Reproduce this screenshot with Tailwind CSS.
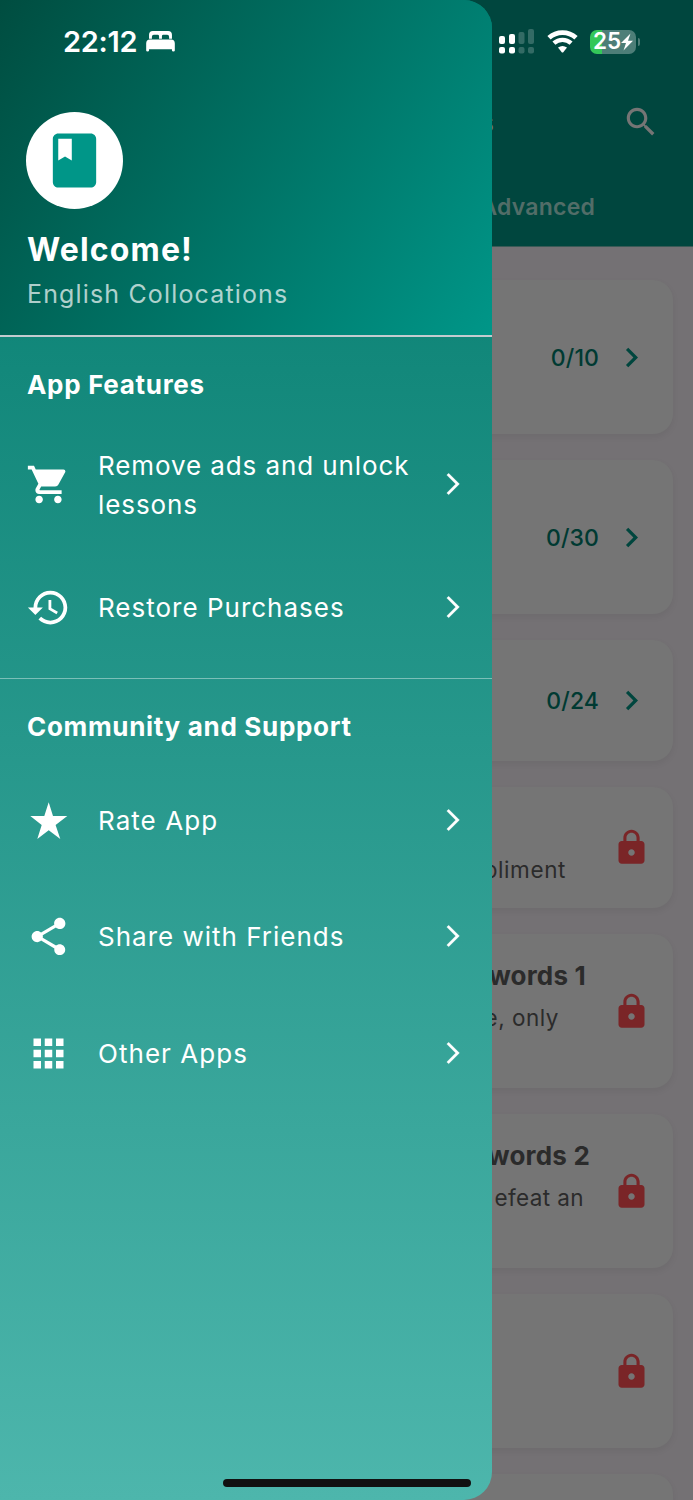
<!DOCTYPE html>
<html lang="en">
<head>
    <meta charset="UTF-8">
    <title>English Collocations</title>
    <script src="https://cdn.jsdelivr.net/npm/@tailwindcss/browser@4"></script>
</head>
<body class="relative w-[693px] h-[1500px] overflow-hidden bg-[#747174] font-['Inter','Liberation_Sans',sans-serif]">

<svg class="hidden">
    <symbol id="next" viewBox="0 0 24 24"><path d="M6.23 20.23 8 22l10-10L8 2 6.23 3.77 14.46 12z" stroke="white" stroke-width=".2" stroke-linejoin="round"/></symbol>
    <symbol id="chevron" viewBox="0 0 24 24"><path d="M10 6 8.59 7.41 13.17 12l-4.58 4.59L10 18l6-6z"/></symbol>
    <symbol id="lock" viewBox="0 0 24 24"><path d="M18 8h-1V6c0-2.76-2.24-5-5-5S7 3.24 7 6v2H6c-1.1 0-2 .9-2 2v10c0 1.1.9 2 2 2h12c1.1 0 2-.9 2-2V10c0-1.1-.9-2-2-2zm-6 9c-1.1 0-2-.9-2-2s.9-2 2-2 2 .9 2 2-.9 2-2 2zm3.1-9H8.9V6c0-1.71 1.39-3.1 3.1-3.1 1.71 0 3.1 1.39 3.1 3.1v2z"/></symbol>
</svg>

<!-- Lessons screen, dimmed behind the drawer -->
<main class="h-[1500px] overflow-hidden">
    <header class="h-[247px] bg-[#00463e] border-b border-[#3a5a56] pt-[98px]">
        <div class="h-[47px] pr-[33px] flex items-center justify-between text-[#757575]">
            <span class="w-[494px] pt-[2px] text-right text-[26px] font-medium">Collocations</span>
            <svg class="w-[38px] h-[38px] fill-[#757575]" viewBox="0 0 24 24"><path d="M15.5 14h-.79l-.28-.27C15.41 12.59 16 11.11 16 9.5 16 5.91 13.09 3 9.5 3S3 5.91 3 9.5 5.91 16 9.5 16c1.61 0 3.09-.59 4.23-1.57l.27.28v.79l5 4.99L20.49 19l-4.99-5zm-6 0C7.01 14 5 11.99 5 9.5S7.01 5 9.5 5 14 7.01 14 9.5 11.99 14 9.5 14z"/></svg>
        </div>
        <div class="mt-[47px] pr-[98px] text-right text-[23px] leading-[31px] font-semibold tracking-[0.2px] text-[#526d68]">Advanced</div>
    </header>
    <section class="pl-5 pr-5 pt-[33px] flex flex-col gap-[26px] text-[#2b2b2b]">
        <div class="h-[154px] shrink-0 rounded-[20px] bg-[#757575] shadow-[0_3px_7px_rgba(0,0,0,0.06)] pr-[22px] flex items-center justify-end gap-[13px] text-[23px] font-medium tracking-[0.1px] text-[#003a32]">
            <span class="pt-[2px]">0/10</span>
            <svg class="w-[39px] h-[39px] fill-[#00463e]"><use href="#chevron"/></svg>
        </div>
        <div class="h-[154px] shrink-0 rounded-[20px] bg-[#757575] shadow-[0_3px_7px_rgba(0,0,0,0.06)] pr-[22px] flex items-center justify-end gap-[13px] text-[23px] font-medium tracking-[0.1px] text-[#003a32]">
            <span class="pt-[2px]">0/30</span>
            <svg class="w-[39px] h-[39px] fill-[#00463e]"><use href="#chevron"/></svg>
        </div>
        <div class="h-[121px] shrink-0 rounded-[20px] bg-[#757575] shadow-[0_3px_7px_rgba(0,0,0,0.06)] pr-[22px] flex items-center justify-end gap-[13px] text-[23px] font-medium tracking-[0.1px] text-[#003a32]">
            <span class="pt-[2px]">0/24</span>
            <svg class="w-[39px] h-[39px] fill-[#00463e]"><use href="#chevron"/></svg>
        </div>
        <div class="h-[121px] shrink-0 rounded-[20px] bg-[#757575] shadow-[0_3px_7px_rgba(0,0,0,0.06)] pr-[22px] flex items-center">
            <div class="w-[546px] pt-[45px] text-right text-[22.5px] leading-[32px] tracking-[0.6px]">compliment</div>
            <svg class="ml-auto w-[39px] h-[39px] fill-[#7a2527]"><use href="#lock"/></svg>
        </div>
        <div class="h-[154px] shrink-0 rounded-[20px] bg-[#757575] shadow-[0_3px_7px_rgba(0,0,0,0.06)] pr-[22px] flex items-center justify-between">
            <div class="h-full pt-[24px]">
                <div class="w-[566px] text-right text-[26px] leading-[36px] font-bold tracking-[0.2px]">words 1</div>
                <div class="w-[539px] mt-[8px] text-right text-[22.5px] leading-[32px] tracking-[0.5px]">e, only</div>
            </div>
            <svg class="-ml-20 w-[39px] h-[39px] fill-[#7a2527]"><use href="#lock"/></svg>
        </div>
        <div class="h-[154px] shrink-0 rounded-[20px] bg-[#757575] shadow-[0_3px_7px_rgba(0,0,0,0.06)] pr-[22px] flex items-center justify-between">
            <div class="h-full pt-[24px]">
                <div class="w-[570px] text-right text-[26px] leading-[36px] font-bold tracking-[0.2px]">words 2</div>
                <div class="w-[564px] mt-[8px] text-right text-[22.5px] leading-[32px] tracking-[0.4px]">efeat an</div>
            </div>
            <svg class="-ml-20 w-[39px] h-[39px] fill-[#7a2527]"><use href="#lock"/></svg>
        </div>
        <div class="h-[154px] shrink-0 rounded-[20px] bg-[#757575] shadow-[0_3px_7px_rgba(0,0,0,0.06)] pr-[22px] flex items-center justify-end">
            <svg class="w-[39px] h-[39px] fill-[#7a2527]"><use href="#lock"/></svg>
        </div>
        <div class="h-[154px] shrink-0 rounded-[20px] bg-[#757575] shadow-[0_3px_7px_rgba(0,0,0,0.06)]"></div>
    </section>
</main>

<!-- Drawer -->
<aside class="absolute left-0 top-0 w-[492px] h-[1500px] overflow-hidden rounded-r-[28px] bg-[linear-gradient(180deg,#00796b,#4db6ac)] text-white fill-white">
    <div class="h-[337px] bg-[linear-gradient(124.3deg,#004d40,#009688)] border-b-2 border-[#c2ccd0] pt-[112px] pl-[26px]">
        <div class="w-[97px] h-[97px] rounded-full bg-white flex items-center justify-center">
            <svg class="w-[65px] h-[65px] fill-[#009688]" viewBox="0 0 24 24"><path d="M18 2H6c-1.1 0-2 .9-2 2v16c0 1.1.9 2 2 2h12c1.1 0 2-.9 2-2V4c0-1.1-.9-2-2-2zM6 4h5v8l-2.500-1.500L6 12V4z"/></svg>
        </div>
        <div class="mt-[20px] pl-px text-[32px] leading-[42px] font-bold tracking-[1.15px]">Welcome!</div>
        <div class="mt-[6px] pl-px text-[25px] leading-[34px] tracking-[1.15px] text-white/70">English Collocations</div>
    </div>

    <div class="h-[342px] border-b-[1.5px] border-white/40 pt-[30px] pl-[26px] pr-[26px]">
        <h2 class="pl-px text-[26px] leading-[36px] font-bold tracking-[0.7px]">App Features</h2>
        <div class="mt-[42px] h-[78px] flex items-center">
            <svg class="w-[45px] h-[45px]" viewBox="0 0 24 24"><path d="M7 18c-1.1 0-1.99.9-1.99 2S5.9 22 7 22s2-.9 2-2-.9-2-2-2zM1 2v2h2l3.6 7.59-1.35 2.45c-.16.28-.25.61-.25.96 0 1.1.9 2 2 2h12v-2H7.42c-.14 0-.25-.11-.25-.25l.03-.12.9-1.63h7.45c.75 0 1.41-.41 1.75-1.03l3.58-6.49c.08-.14.12-.31.12-.48 0-.55-.45-1-1-1H5.21l-.94-2H1zm16 16c-1.1 0-1.99.9-1.99 2s.89 2 1.99 2 2-.9 2-2-.9-2-2-2z"/></svg>
            <span class="ml-[27px] w-[330px] pt-px text-[26px] leading-[39px] tracking-[0.9px]">Remove ads and unlock lessons</span>
            <svg class="ml-auto w-[26px] h-[26px]"><use href="#next"/></svg>
        </div>
        <div class="mt-[65px] h-[38px] flex items-center">
            <svg class="w-[45px] h-[45px]" viewBox="0 0 24 24"><path d="M13 3c-4.97 0-9 4.03-9 9H1l3.89 3.89.07.14L9 12H6c0-3.87 3.13-7 7-7s7 3.13 7 7-3.13 7-7 7c-1.93 0-3.68-.79-4.94-2.06l-1.42 1.42C8.27 19.99 10.51 21 13 21c4.97 0 9-4.03 9-9s-4.03-9-9-9zm-1 5v5l4.28 2.54.72-1.21-3.5-2.08V8H12z"/></svg>
            <span class="ml-[27px] pt-px text-[26px] tracking-[1px]">Restore Purchases</span>
            <svg class="ml-auto w-[26px] h-[26px]"><use href="#next"/></svg>
        </div>
    </div>

    <div class="pt-[30px] pl-[26px] pr-[26px]">
        <h2 class="pl-px text-[26px] leading-[36px] font-bold tracking-[0.68px]">Community and Support</h2>
        <div class="mt-[56px] h-[38px] flex items-center">
            <svg class="w-[45px] h-[45px]" viewBox="0 0 45 45"><path d="M22.7 4.2 27 17.9H41.3L29.6 26.9 34.3 40.9 22.7 32.2 11.3 40.9 15.7 26.9 4.3 17.9H18.3z"/></svg>
            <span class="ml-[27px] text-[26px] tracking-[1.05px]">Rate App</span>
            <svg class="ml-auto w-[26px] h-[26px]"><use href="#next"/></svg>
        </div>
        <div class="mt-[78px] h-[38px] flex items-center">
            <svg class="w-[45px] h-[45px]" viewBox="0 0 24 24"><path d="M18 16.08c-.76 0-1.44.3-1.96.77L8.91 12.7c.05-.23.09-.46.09-.7s-.04-.47-.09-.7l7.05-4.11c.54.5 1.25.81 2.04.81 1.66 0 3-1.34 3-3s-1.34-3-3-3-3 1.34-3 3c0 .24.04.47.09.7L8.04 9.81C7.5 9.31 6.79 9 6 9c-1.66 0-3 1.34-3 3s1.34 3 3 3c.79 0 1.5-.31 2.04-.81l7.12 4.16c-.05.21-.08.43-.08.65 0 1.61 1.31 2.92 2.92 2.92s2.92-1.31 2.92-2.92-1.31-2.92-2.92-2.92z"/></svg>
            <span class="ml-[27px] text-[26px] tracking-[1px]">Share with Friends</span>
            <svg class="ml-auto w-[26px] h-[26px]"><use href="#next"/></svg>
        </div>
        <div class="mt-[79px] h-[38px] flex items-center">
            <svg class="w-[45px] h-[45px]" viewBox="0 0 24 24"><path d="M4 8h4V4H4v4zm6 12h4v-4h-4v4zm-6 0h4v-4H4v4zm0-6h4v-4H4v4zm6 0h4v-4h-4v4zm6-10v4h4V4h-4zm-6 4h4V4h-4v4zm6 6h4v-4h-4v4zm0 6h4v-4h-4v4z"/></svg>
            <span class="ml-[27px] text-[26px] tracking-[1.05px]">Other Apps</span>
            <svg class="ml-auto w-[26px] h-[26px]"><use href="#next"/></svg>
        </div>
    </div>
</aside>

<!-- Status bar -->
<div class="absolute left-0 top-0 w-full h-[83px] pl-[63px] pr-[53px] flex items-center text-white fill-white">
    <span class="text-[29px] leading-[30px] font-semibold tracking-[-0.3px]">22:12</span>
    <svg class="ml-[9px] w-[29px] h-[21px]" viewBox="0 0 30 22"><path d="M3 8V4q0-4 4-4h16q4 0 4 4v4h-3V6q0-2-2-2h-4q-1.500 0-1.500 1.500V8h-3V5.500Q13.500 4 12 4H8Q6 4 6 6v2zM0 13q0-4 4-4h22q4 0 4 4v7.500q0 1-1.500 1t-1.500-1V19H3v1.500q0 1-1.500 1t-1.500-1z"/></svg>
    <svg class="ml-auto w-[36px] h-[25px]" viewBox="0 0 36 25">
        <g><rect y="7" width="6" height="8" rx="2"/><rect y="18" width="6" height="6.500" rx="2"/><rect x="10" y="5" width="6" height="10" rx="2"/><rect x="10" y="18" width="6" height="6.500" rx="2"/></g>
        <g opacity=".2"><rect x="19.500" y="3" width="6" height="12" rx="2"/><rect x="19.500" y="18" width="6" height="6.500" rx="2"/><rect x="29" width="6" height="15" rx="2"/><rect x="29" y="18" width="6" height="6.500" rx="2"/></g>
    </svg>
    <svg class="ml-[12px] w-[31px] h-[23px]" viewBox="0 0 31 23">
        <g fill="none" stroke="white"><path stroke-width="4.800" d="M2 7.800a20 20 0 0 1 27 0"/><path stroke-width="4.400" d="M6.900 13.200a12.800 12.800 0 0 1 17.200 0"/></g>
        <path d="M11 17.600a7.500 7.500 0 0 1 9 0l-3.500 4.400q-1 1-2 0z"/>
    </svg>
    <div class="ml-[12px] w-[46px] h-[24px] rounded-[7px] bg-linear-to-r from-[#34c759] from-25% to-[#4d7e78] to-25% flex items-center justify-center text-[22.5px] leading-[22px] font-semibold tracking-[-0.2px]">
        <span class="pb-[2px]">25</span><svg class="w-[12px] h-[18px]" viewBox="0 0 12 17"><path d="M9.500 0 0 9.500h5L2.500 17 12 7.200H7z"/></svg>
    </div>
    <div class="ml-[2px] w-[2px] h-[8px] rounded-r-full bg-[#4d7e78]"></div>
</div>

<!-- Home indicator -->
<div class="absolute left-[223px] top-[1479px] w-[248px] h-[8px] rounded-full bg-[#111]"></div>
</body>
</html>
